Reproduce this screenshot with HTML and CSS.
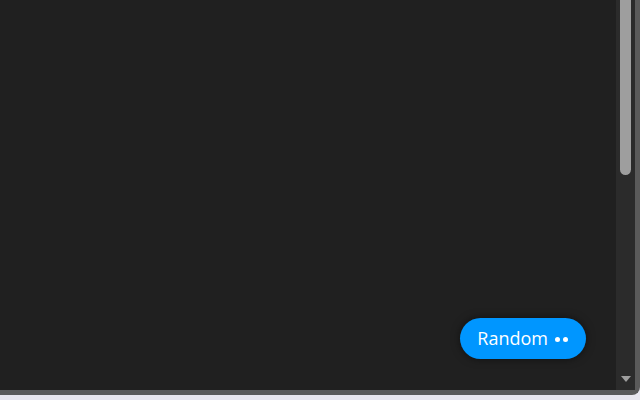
FILE: index.html
```html
<!DOCTYPE html>
<html>
<head>
<meta charset="utf-8">
<link rel="stylesheet" href="styles.css">
</head>
<body>
<div class="window">
  <main class="content">
    <button class="random-btn"><span class="label">Random</span><span class="dots"><span class="dot"></span><span class="dot"></span></span></button>
  </main>
  <div class="scrollbar">
    <div class="thumb"></div>
    <div class="spacer"></div>
    <div class="arrow"></div>
  </div>
</div>
</body>
</html>
```
FILE: styles.css
```css
html, body {
  margin: 0;
  height: 400px;
  background: #e8e6ee;
  overflow: hidden;
}
.window {
  display: flex;
  width: 635px;
  height: 390px;
  background: #202020;
  border-right: 5px solid #5a5a5a;
  border-bottom: 5px solid #5a5a5a;
  border-bottom-right-radius: 8px;
}
.content {
  flex: 1;
  display: flex;
  justify-content: flex-end;
  align-items: flex-end;
  padding: 0 30px 31px 0;
}
.random-btn {
  display: flex;
  align-items: center;
  height: 41px;
  padding: 0 18px 2px 17px;
  border: none;
  border-radius: 21px;
  background: #0096ff;
  color: #ffffff;
  font-family: "Open Sans", sans-serif;
  font-size: 18px;
  font-weight: 500;
  box-shadow: 0 0 8px rgba(0, 0, 0, 0.5);
}
.dots {
  display: flex;
  gap: 3px;
  margin-left: 7px;
  margin-top: 4px;
}
.dot {
  width: 5px;
  height: 5px;
  border-radius: 50%;
  background: #ffffff;
}
.scrollbar {
  width: 19px;
  background: #2b2b2b;
  display: flex;
  flex-direction: column;
  align-items: center;
}
.thumb {
  width: 11px;
  height: 175px;
  background: #9e9e9e;
  border-radius: 0 0 6px 6px;
}
.spacer {
  flex: 1;
}
.arrow {
  width: 0;
  height: 0;
  border-left: 5px solid transparent;
  border-right: 5px solid transparent;
  border-top: 6px solid #9e9e9e;
  margin-bottom: 8px;
}
```
